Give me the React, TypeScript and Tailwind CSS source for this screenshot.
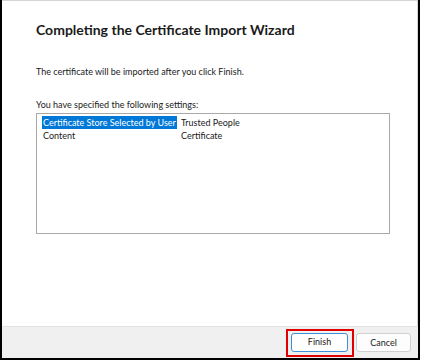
import React from 'react';

const rows = [
  { label: 'Certificate Store Selected by User', value: 'Trusted People', selected: true },
  { label: 'Content', value: 'Certificate', selected: false },
];

const App: React.FC = () => {
  return (
    <div className="w-[422px] h-[360px] bg-white" style={{ fontFamily: '"Lato", "Noto Sans", sans-serif' }}>
      <div className="w-[420px] h-[360px] border-l-2 border-r-2 border-b-2 border-black flex flex-col">
        <div className="flex-1 border-t border-r border-[#d4d4d4] flex flex-col pl-[34px]">
          <h1 className="mt-[20px] text-[14px] leading-[17px] font-bold text-[#1a1a1a]">
            Completing the Certificate Import Wizard
          </h1>
          <p className="mt-[28px] text-[9px] leading-[12px] text-[#1a1a1a]">
            The certificate will be imported after you click Finish.
          </p>
          <p className="mt-[21px] text-[9px] leading-[12px] text-[#1a1a1a]">
            You have specified the following settings:
          </p>
          <div className="mt-[2px] w-[354px] h-[121px] border border-[#a9a9a9] px-[5px] py-[2px]">
            {rows.map(row => (
              <div key={row.label} className="flex h-[13px] items-center text-[9px] leading-[12px]">
                <div className="w-[139px]">
                  <span className={row.selected ? 'bg-[#0078d7] text-white px-[1px] py-[1px]' : 'text-[#1a1a1a] px-[1px]'}>
                    {row.label}
                  </span>
                </div>
                <span className="text-[#1a1a1a]">{row.value}</span>
              </div>
            ))}
          </div>
        </div>
        <div className="h-[32px] bg-[#f0f0f0] border-t border-[#e2e2e2] flex items-center justify-end pr-[7px] gap-[2px]">
          <div className="border-2 border-[#e00000] pt-[2px] pb-[3px] pl-[3px] pr-[4px]">
            <button className="w-[57px] h-[19px] bg-white border border-[#3c8fd6] rounded-[3px] text-[9px] text-[#1a1a1a] flex items-center justify-center">
              Finish
            </button>
          </div>
          <button className="w-[55px] h-[19px] bg-[#fdfdfd] border border-[#d0d0d0] rounded-[3px] text-[9px] text-[#1a1a1a] flex items-center justify-center">
            Cancel
          </button>
        </div>
      </div>
    </div>
  );
};

export default App;
